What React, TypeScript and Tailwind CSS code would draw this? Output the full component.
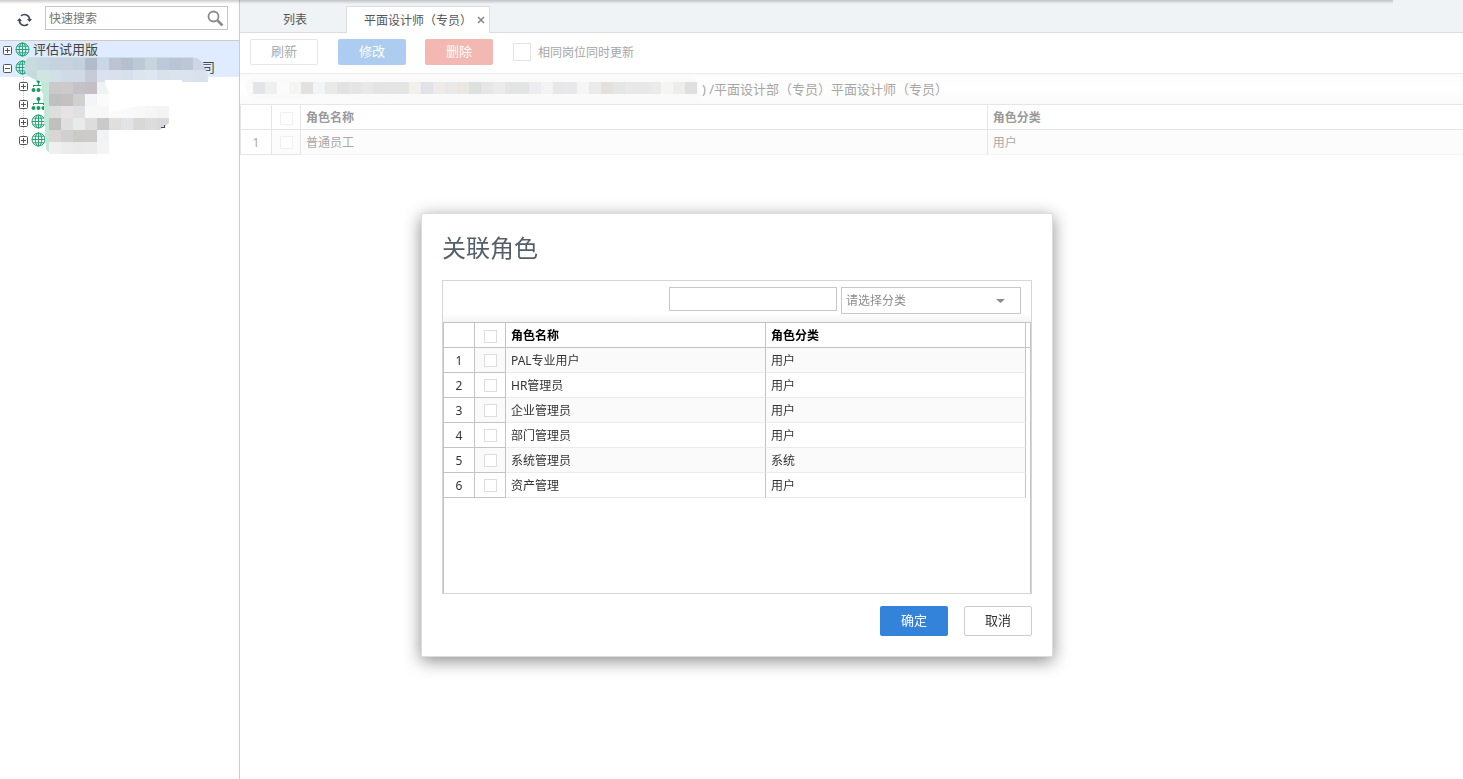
import { useState } from 'react';
import type { InputHTMLAttributes, ReactNode } from 'react';

interface Role {
  name: string;
  category: string;
}

const roles: Role[] = [
  { name: 'PAL专业用户', category: '用户' },
  { name: 'HR管理员', category: '用户' },
  { name: '企业管理员', category: '用户' },
  { name: '部门管理员', category: '用户' },
  { name: '系统管理员', category: '系统' },
  { name: '资产管理', category: '用户' },
];

// Colour rows of the pixelated masks, one entry per 12px block
const treeMask = [
  { x: 13, y: 58, colors: ['#c4dbde', '#c8dbdf', '#c7d7e0', '#c4d3df', '#c6d2de', '#c3d0de', '#b1bbca', '#c9d6e6', '#bcc3d1', '#b5c0ce', '#bdc8d5', '#c8d4de', '#bdc8d8', '#b9c5d6', '#bcc6d4', '#ccd6e5'] },
  { x: 13, y: 70, colors: ['#c4dbde', '#c5dcdc', '#d0e4e0', '#d3dfe6', '#d0dae6', '#d0d9e4', '#c5cbd8', '#dbe2ef', '#dbe1ec', '#d6dfea', '#dce4ee', '#dee6ef', '#d9e2ec', '#dbe4ee', '#dbe4ee', '#d9e1ed', '#dbe3ef'] },
];

const childMask = [
  { x: 49, y: 82, colors: ['#cbcaca', '#cccacb', '#c6c3c8', '#c5bec4', '#eff3f4'] },
  { x: 49, y: 94, colors: ['#c1c0c0', '#c3c2c1', '#d0cfd2', '#f3f5f8', '#fbfbfb'] },
  { x: 49, y: 106, colors: ['#dededf', '#e5e3e3', '#e0dfe1', '#f8f8f8', '#f7f7f7', '#fafafa', '#fafafa', '#f8f8f8', '#f6f6f6', '#f4f4f4'] },
  { x: 49, y: 118, colors: ['#bfbfbf', '#dfdfdf', '#e9eaea', '#dddddd', '#cacaca', '#e0dfdd', '#e2e3e5', '#d8d8d6', '#dcdcdc', '#d9d8db'] },
  { x: 49, y: 130, colors: ['#d7d5d6', '#d1d0d1', '#cacac9', '#cccbca', '#f2f3f5'] },
  { x: 49, y: 142, colors: ['#f1f0f0', '#ececec', '#eaeaea', '#ebebeb', '#f4f4f4'] },
];

const pathMask = [
  '#e3e4e8', '#efeff0', '#fbfbfb', '#f5f5f3', '#e2e1e0', '#f2f4f8', '#e9e9e7', '#e2e2e2', '#e5e5e5', '#e8e8e8',
  '#e3e4e3', '#e5e5e5', '#e3e6e5', '#f2efec', '#e2e3e8', '#edebe9', '#e9e9e9', '#e9e6e4', '#dce0df', '#e6e6e6',
  '#ebebeb', '#e5e5e5', '#e2e5e4', '#ededf0', '#f3f3f3', '#e7e7e7', '#e8e8ea', '#f5f5f5', '#ebebeb', '#e3e1df',
  '#e5e6e6', '#e8e8e8', '#e8e8e8', '#ebebeb', '#f5f5f3', '#ededeb', '#dfdfe0',
];

function MaskRow({ x, y, colors }: { x: number; y: number; colors: string[] }) {
  return (
    <>
      {colors.map((color, i) => (
        <rect key={i} x={x + i * 12} y={y} width="12" height="12" fill={color} />
      ))}
    </>
  );
}

function TreeMask() {
  return (
    <svg className="absolute top-0 left-0" width="239" height="120" viewBox="0 41 239 120" shapeRendering="crispEdges" aria-hidden="true">
      <defs>
        <clipPath id="rootMask">
          <path d="M28 57 H193 Q202 58 205 69 L208 74 V82 H182 V80 H105 V82 H42 Q28 78 25 72 Q23 64 28 57Z" />
        </clipPath>
        <clipPath id="childMask">
          <path d="M49 82 H105 L109 94 V112 L140 106 H169 V123 L160 130 H109 V154 H49Z" />
        </clipPath>
      </defs>
      <path d="M40 80 H50 V154 L46 149 Q45 140 44 110 Q43 90 40 80Z" fill="#c3e7d8" />
      <g clipPath="url(#rootMask)">
        <rect x="24" y="56" width="170" height="2" fill="#cbdde9" />
        {treeMask.map((row) => <MaskRow key={row.y} {...row} />)}
      </g>
      <g clipPath="url(#childMask)">
        {childMask.map((row) => <MaskRow key={row.y} {...row} />)}
      </g>
      <path d="M161 127.500h3.500v-2.500" fill="none" stroke="#4d4466" />
    </svg>
  );
}

function PathMask() {
  return (
    <svg className="shrink-0" width="454" height="30" viewBox="246 74 454 30" aria-hidden="true">
      <path d="M252 77 H692 Q700 80 700 94 V104 H540 L256 99 Q246 96 246 88 Q247 79 252 77Z" fill="#fafafa" />
      <g shapeRendering="crispEdges">
        <MaskRow x={253} y={82} colors={pathMask} />
      </g>
    </svg>
  );
}

function GlobeIcon() {
  return (
    <svg className="shrink-0" width="15" height="15" viewBox="0 0 15 15" fill="none" stroke="#25a374" aria-hidden="true">
      <circle cx="7.500" cy="7.500" r="6.500" />
      <ellipse cx="7.500" cy="7.500" rx="3.300" ry="6.500" />
      <path d="M7.500 1v13M1 7.500h13M2.200 4.200h10.600M2.200 10.800h10.600" />
    </svg>
  );
}

function OrgIcon() {
  return (
    <svg className="shrink-0" width="15" height="15" viewBox="0 0 15 15" fill="#12a05c" aria-hidden="true">
      <circle cx="7.500" cy="3" r="2" />
      <path d="M7 4h1v3h5v2h-1V8H3v1H2V7h5z" />
      <circle cx="2.500" cy="12" r="2" />
      <circle cx="7.500" cy="12" r="2" />
      <circle cx="12.500" cy="12" r="2" />
    </svg>
  );
}

function ExpandIcon({ open }: { open?: boolean }) {
  return (
    <svg width="9" height="9" viewBox="0 0 9 9" fill="none" stroke="#555" aria-hidden="true">
      <rect x="0.500" y="0.500" width="8" height="8" rx="1" fill="#fff" />
      <path d={open ? 'M2 4.500h5' : 'M2 4.500h5M4.500 2v5'} />
    </svg>
  );
}

function RefreshIcon() {
  return (
    <svg width="15" height="14" viewBox="0 0 15 14" fill="none" stroke="#3d4a5c" strokeWidth="1.600" aria-hidden="true">
      <path d="M4 2.800A5.200 5.200 0 0 1 12.600 7M11 11.200A5.200 5.200 0 0 1 2.400 7" />
      <path d="M10 6h5l-2.500 3zM0 8h5L2.500 5z" fill="#3d4a5c" stroke="none" />
    </svg>
  );
}

function SearchIcon() {
  return (
    <svg width="17" height="17" viewBox="0 0 17 17" fill="none" stroke="#8c8c8c" aria-hidden="true">
      <circle cx="6.500" cy="6.500" r="5" strokeWidth="1.800" />
      <path d="M10.500 10.500l5 5" strokeWidth="2.600" />
    </svg>
  );
}

function Checkbox({ className, ...props }: InputHTMLAttributes<HTMLInputElement>) {
  return (
    <input
      type="checkbox"
      className={`block appearance-none border bg-white checked:bg-[#3483db] ${className}`}
      {...props}
    />
  );
}

interface TreeNodeProps {
  icon: ReactNode;
  label?: string;
  name: string;
  className?: string;
}

function TreeNode({ icon, label, name, className = 'pl-[19px]' }: TreeNodeProps) {
  return (
    <li className={`flex h-[18px] items-center pb-px ${className}`}>
      <button type="button" aria-label={name} className="mt-[2px] mr-[3px]">
        <ExpandIcon />
      </button>
      {icon}
      {label && <span className="ml-[3px] whitespace-nowrap">{label}</span>}
    </li>
  );
}

function Sidebar() {
  return (
    <aside className="w-60 shrink-0 border-r border-[#ccc] bg-white">
      <div className="flex h-[41px] items-start border-b border-[#ccc] pt-[6px] pr-[11px] pl-[17px]">
        <button type="button" aria-label="刷新" className="mt-[7px] mr-[13px]">
          <RefreshIcon />
        </button>
        <form className="flex h-6 flex-1 items-center border border-[#c4c4c4] pt-px pr-[3px]" onSubmit={(e) => e.preventDefault()}>
          <input
            type="text"
            aria-label="快速搜索"
            placeholder="快速搜索"
            className="w-full min-w-0 pt-px pl-[3px] text-xs outline-none placeholder:text-[#757575]"
          />
          <button type="submit" aria-label="搜索">
            <SearchIcon />
          </button>
        </form>
      </div>
      <div className="relative text-[13px] text-[#444]">
        <ul>
          <TreeNode name="展开" icon={<GlobeIcon />} label="评估试用版" className="bg-[#dfecff] pl-[3px]" />
          <li>
            <div className="flex h-[18px] items-center bg-[#dfecff] pb-px pl-[3px]">
              <button type="button" aria-label="收起" className="mt-[2px] mr-[3px]">
                <ExpandIcon open />
              </button>
              <GlobeIcon />
              <span className="flex-1 pr-6 text-right">司</span>
            </div>
            <ul className="bg-[linear-gradient(#bbb_50%,transparent_50%)] bg-[length:1px_2px] bg-[position:23px_0] bg-repeat-y">
              <TreeNode name="展开" icon={<OrgIcon />} />
              <TreeNode name="展开" icon={<OrgIcon />} />
              <TreeNode name="展开" icon={<GlobeIcon />} />
              <TreeNode name="展开" icon={<GlobeIcon />} />
            </ul>
          </li>
        </ul>
        <TreeMask />
      </div>
    </aside>
  );
}

function Tabs() {
  return (
    <nav className="flex h-[33px] items-end border-b border-[#ddd] bg-[#eff3f6] text-xs text-[#555]">
      <button type="button" className="h-[27px] w-[106px] pt-[2px] pl-1">列表</button>
      <div className="-mb-px flex h-[27px] items-center border border-b-0 border-[#ddd] bg-white pr-[3px] pl-[17px]">
        <button type="button" className="pt-[2px]">平面设计师（专员）</button>
        <button type="button" aria-label="关闭" className="ml-1 p-px">
          <svg width="8" height="8" viewBox="0 0 8 8" stroke="#888" strokeWidth="1.600" aria-hidden="true">
            <path d="M1 1l6 6M7 1l-6 6" />
          </svg>
        </button>
      </div>
    </nav>
  );
}

function Toolbar() {
  return (
    <div className="flex h-[41px] items-center border-b border-[#ebebeb] pb-[2px] pl-[10px] text-[13px]">
      <button type="button" className="h-[26px] w-[68px] rounded-xs border border-[#e6e6e6] bg-white text-[#aaa]">刷新</button>
      <button type="button" className="ml-5 h-[26px] w-[68px] rounded-xs bg-[#adcdf0] text-white">修改</button>
      <button type="button" className="ml-[19px] h-[26px] w-[68px] rounded-xs bg-[#f3b8b1] text-white">删除</button>
      <label className="ml-5 flex items-center gap-[7px] text-xs text-[#a6a6a6]">
        <Checkbox className="size-[18px] border-[#e3e3e3]" />
        <span className="pt-[2px]">相同岗位同时更新</span>
      </label>
    </div>
  );
}

function RoleDialog({ onClose }: { onClose: () => void }) {
  return (
    <div className="fixed inset-0 flex items-start justify-center pt-[213px] pl-[11px]">
      <div
        role="dialog"
        aria-labelledby="dialog-title"
        className="w-[632px] max-w-full border border-[#ddd] bg-white px-5 pt-4 pb-5 shadow-[0_4px_16px_rgba(0,0,0,0.45)]"
      >
        <h2 id="dialog-title" className="h-[50px] text-2xl leading-9 text-[#555f69]">关联角色</h2>
        <div className="border border-[#d6d6d6]">
          <div className="flex h-[41px] items-start justify-end gap-1 bg-linear-to-b from-white from-80% to-[#f3f3f3] pt-[6px] pr-[10px]">
            <input type="text" aria-label="角色名称" className="h-6 w-[168px] border border-[#c8c8c8] bg-white px-1 text-xs outline-none" />
            <div className="relative">
              <select
                aria-label="分类"
                defaultValue=""
                className="block h-[27px] w-[180px] appearance-none border border-[#c8c8c8] bg-white pl-1 text-xs text-[#8c8c8c]"
              >
                <option value="">请选择分类</option>
                <option value="user">用户</option>
                <option value="system">系统</option>
              </select>
              <svg className="pointer-events-none absolute top-3 right-4" width="9" height="4" viewBox="0 0 9 4" fill="#8c8c8c" aria-hidden="true">
                <path d="M0 0h9L4.500 4z" />
              </svg>
            </div>
          </div>
          <div className="h-[271px] overflow-hidden border border-b-0 border-[#c4c4c4]">
            <table className="w-full table-fixed border-separate border-spacing-0 text-left text-xs text-[#333]">
              <thead>
                <tr className="h-[25px] text-black">
                  <th className="w-[31px] border-r border-b border-[#c4c4c4]" />
                  <th className="w-[31px] border-r border-b border-[#c4c4c4] pt-[3px] pl-[9px]">
                    <Checkbox aria-label="全选" className="size-[13px] border-[#ddd]" />
                  </th>
                  <th className="border-r border-b border-[#c4c4c4] pt-[2px] pl-[5px]">角色名称</th>
                  <th className="border-r border-b border-[#c4c4c4] pt-[2px] pl-[5px]">角色分类</th>
                  <th className="w-1 border-b border-[#c4c4c4]" />
                </tr>
              </thead>
              <tbody>
                {roles.map((role, index) => (
                  <tr key={role.name} className="group h-[25px]">
                    <td className="border-r border-b border-[#c4c4c4] pt-[2px] text-center">{index + 1}</td>
                    <td className="border-r border-b border-[#c4c4c4] pt-px pl-[9px] group-odd:bg-[#fafafa]">
                      <Checkbox aria-label={role.name} className="size-[13px] border-[#ddd]" />
                    </td>
                    <td className="border-r border-b border-r-[#c4c4c4] border-b-[#ebebeb] pt-[2px] pl-[5px] group-odd:bg-[#fafafa]">{role.name}</td>
                    <td className="border-r border-b border-r-[#c4c4c4] border-b-[#ebebeb] pt-[2px] pl-[5px] group-odd:bg-[#fafafa]">{role.category}</td>
                    <td />
                  </tr>
                ))}
              </tbody>
            </table>
          </div>
        </div>
        <div className="mt-3 flex justify-end gap-4 text-[13px]">
          <button type="button" className="h-[30px] w-[68px] rounded-xs bg-[#3483db] text-white" onClick={onClose}>确定</button>
          <button type="button" className="h-[30px] w-[68px] rounded-xs border border-[#ccc] bg-white text-[#333]" onClick={onClose}>取消</button>
        </div>
      </div>
    </div>
  );
}

export default function App() {
  const [dialogOpen, setDialogOpen] = useState(true);

  return (
    <div className="relative flex min-h-screen bg-white font-['Noto_Sans','Noto_Sans_CJK_SC',sans-serif]">
      <Sidebar />
      <main className="min-w-0 flex-1">
        <Tabs />
        <Toolbar />
        <div className="flex h-[30px] items-center gap-[2px] bg-linear-to-b from-[#fbfbfb] via-white to-[#fafafa] pl-[6px] text-[13px] text-[#a6a6a6]">
          <PathMask />
          <span className="pt-[2px] whitespace-nowrap">) /平面设计部（专员）平面设计师（专员）</span>
        </div>
        <table className="w-full table-fixed border-separate border-spacing-0 border-t border-l border-[#e6e6e6] text-left text-xs text-[#a8a8a8]">
          <thead>
            <tr className="h-[25px] text-[#999]">
              <th className="w-[31px] border-r border-b border-[#e6e6e6]" />
              <th className="w-[29px] border-r border-b border-[#e6e6e6] pt-[3px] pl-2">
                <Checkbox aria-label="全选" className="size-[13px] border-[#f0f0f0]" />
              </th>
              <th className="w-[56.2%] border-r border-b border-[#e6e6e6] pt-[2px] pl-[5px]">角色名称</th>
              <th className="border-b border-[#e6e6e6] pt-[2px] pl-[5px]">角色分类</th>
            </tr>
          </thead>
          <tbody>
            <tr className="h-[25px]">
              <td className="border-r border-b border-[#e6e6e6] pt-[2px] text-center">1</td>
              <td className="border-r border-b border-[#e6e6e6] bg-[#fcfcfc] pt-px pl-2">
                <Checkbox aria-label="普通员工" className="size-[13px] border-[#f0f0f0]" />
              </td>
              <td className="border-r border-b border-r-[#e6e6e6] border-b-[#f5f5f5] bg-[#fcfcfc] pt-[2px] pl-[5px]">普通员工</td>
              <td className="border-b border-[#f5f5f5] bg-[#fcfcfc] pt-[2px] pl-[5px]">用户</td>
            </tr>
          </tbody>
        </table>
      </main>
      <div className="pointer-events-none absolute top-0 right-[70px] left-0 h-1 bg-linear-to-b from-black/20 to-transparent" />
      {dialogOpen && <RoleDialog onClose={() => setDialogOpen(false)} />}
    </div>
  );
}
